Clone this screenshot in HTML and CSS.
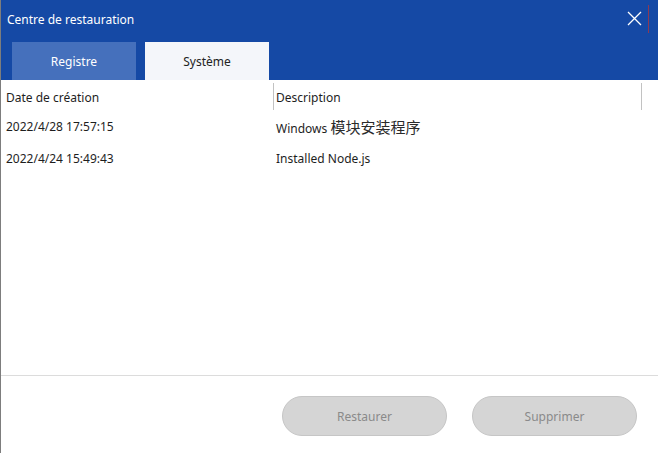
FILE: index.html
```html
<!DOCTYPE html>
<html lang="fr">
<head>
<meta charset="utf-8">
<title>Centre de restauration</title>
<link rel="stylesheet" href="styles.css">
</head>
<body>
<div class="window">
  <div class="header">
    <div class="titlebar">
      <span class="title">Centre de restauration</span>
      <button class="close" aria-label="Fermer">
        <svg width="15" height="15" viewBox="0 0 15 15"><path d="M1 1L14 14M14 1L1 14" stroke="#fff" stroke-width="1.3" fill="none"/></svg>
      </button>
      <span class="edge"></span>
    </div>
    <div class="tabs">
      <div class="tab">Registre</div>
      <div class="tab active">Système</div>
    </div>
  </div>
  <div class="content">
    <div class="row head">
      <div class="cell c1">Date de création</div>
      <div class="cell c2">Description</div>
    </div>
    <div class="row">
      <div class="cell c1">2022/4/28 17:57:15</div>
      <div class="cell c2">Windows <span class="cjk">模块安装程序</span></div>
    </div>
    <div class="row">
      <div class="cell c1">2022/4/24 15:49:43</div>
      <div class="cell c2">Installed Node.js</div>
    </div>
  </div>
  <div class="footer">
    <button class="btn">Restaurer</button>
    <button class="btn">Supprimer</button>
  </div>
</div>
</body>
</html>
```
FILE: styles.css
```css
* { box-sizing: border-box; }
html, body { margin: 0; padding: 0; }
body {
  width: 658px;
  height: 453px;
  overflow: hidden;
  background: #fff;
  font-family: "Noto Sans", "Noto Sans CJK SC", sans-serif;
  font-size: 12px;
  color: #1e1e1e;
}
.window {
  height: 453px;
  border-left: 1px solid #7d7d7d;
  display: flex;
  flex-direction: column;
}
.header {
  background: #1549a5;
  height: 80px;
  display: flex;
  flex-direction: column;
}
.titlebar {
  height: 42px;
  display: flex;
  align-items: flex-start;
  padding: 11px 0 0 6px;
}
.title {
  color: #fff;
  line-height: 18px;
  flex: 1;
}
.close {
  background: none;
  border: 0;
  padding: 0;
  margin: 0;
  width: 15px;
  height: 15px;
  display: flex;
}
.edge {
  width: 1px;
  height: 28px;
  margin: -6px 9px 0 6px;
  background: #8a3a55;
}
.tabs {
  display: flex;
  gap: 9px;
  padding-left: 11px;
  height: 38px;
}
.tab {
  width: 124px;
  height: 38px;
  background: #4570bc;
  color: #fff;
  display: flex;
  align-items: center;
  justify-content: center;
}
.tab.active {
  background: #f4f6fa;
  color: #222;
}
.content {
  flex: 1;
}
.row {
  display: flex;
  height: 32px;
  align-items: center;
}
.row.head {
  height: 30px;
  align-items: stretch;
  padding-top: 3px;
}
.cell { white-space: nowrap; }
.c1 {
  width: 272px;
  padding-left: 5px;
}
.c2 {
  padding-left: 3px;
}
.cjk {
  font-family: "Noto Sans CJK SC", sans-serif;
  font-size: 15px;
  color: #2a2a2a;
}
.head .cell {
  display: flex;
  align-items: center;
  padding-top: 2px;
}
.head .c2 {
  width: 369px;
  border-left: 1px solid #c2c2c2;
  border-right: 1px solid #c2c2c2;
  padding-left: 2px;
}
.footer {
  height: 78px;
  border-top: 1px solid #dcdcdc;
  display: flex;
  justify-content: flex-end;
  gap: 25px;
  padding: 20px 21px 0 0;
}
.btn {
  width: 165px;
  height: 40px;
  border-radius: 20px;
  background: #d5d5d5;
  border: 1px solid #c6c6c6;
  color: #8a8a8a;
  font-family: "Noto Sans", sans-serif;
  font-size: 12px;
}
```
